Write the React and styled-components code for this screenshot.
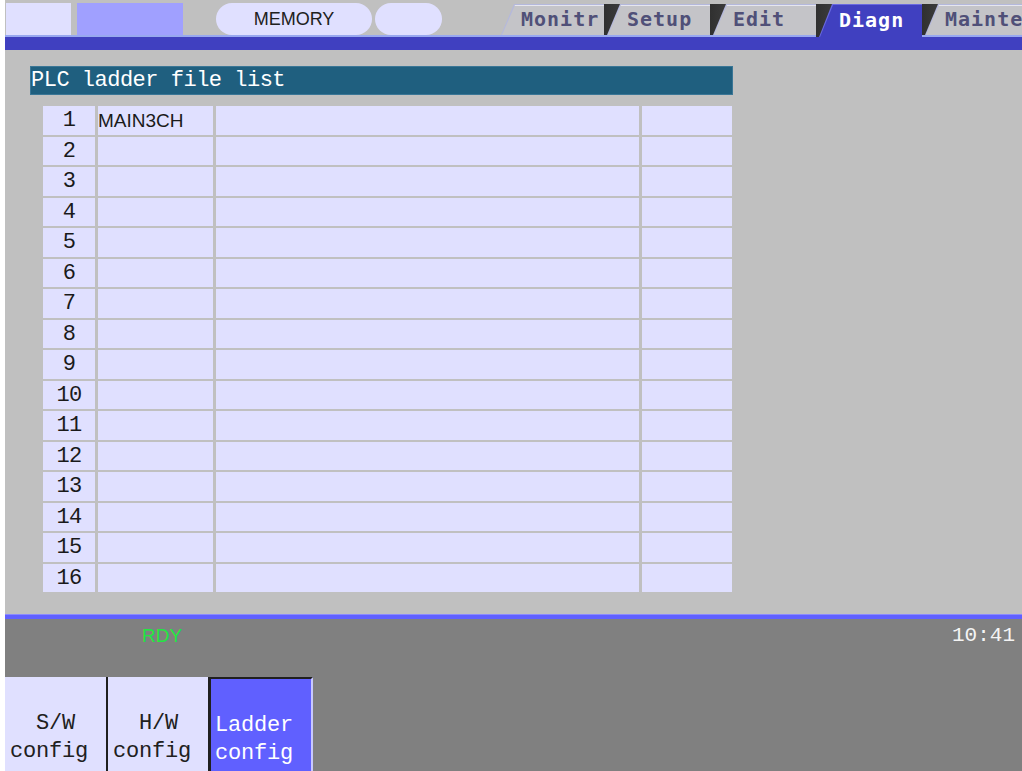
import React from 'react';
import styled, { createGlobalStyle } from 'styled-components';

const GlobalStyle = createGlobalStyle`
  body {
    margin: 0;
    background: #ffffff;
  }
`;

const mono = `"Liberation Mono", "DejaVu Sans Mono", monospace`;
const boldMono = `"DejaVu Sans Mono", "Liberation Mono", monospace`;
const sans = `"Liberation Sans", Arial, sans-serif`;

const tabs = [
  { name: 'Monitr', first: true },
  { name: 'Setup' },
  { name: 'Edit' },
  { name: 'Diagn', active: true },
  { name: 'Mainte' },
];

const softKeys = [
  { lines: ['  S/W', 'config'], width: 103 },
  { lines: ['  H/W', 'config'], width: 102 },
  { lines: ['Ladder', 'config'], width: 103, active: true },
];

const rows = Array.from({ length: 16 }, (_, i) => ({
  no: i + 1,
  file: i === 0 ? 'MAIN3CH' : '',
}));

function App() {
  return (
    <>
      <GlobalStyle />
      <Screen>
        <Header>
          <ModeBox $width={65} $color="#e0e0ff" style={{ marginLeft: 1 }} />
          <ModeBox $width={106} $color="#a0a0ff" />
          <Pill $width={156} $gap={33}>MEMORY</Pill>
          <Pill $width={67} $gap={3} />
          <TabRow>
            {tabs.map(t => (
              <TabSlot key={t.name} $active={t.active} $first={t.first}>
                <TabEdge $active={t.active}>
                  <TabFace $active={t.active}>{t.name}</TabFace>
                </TabEdge>
              </TabSlot>
            ))}
          </TabRow>
        </Header>
        <Band />
        <Main>
          <TitleBar>PLC ladder file list</TitleBar>
          <FileGrid>
            {rows.map(r => (
              <React.Fragment key={r.no}>
                <Cell $align="center">{r.no}</Cell>
                <Cell $sans>{r.file}</Cell>
                <Cell />
                <Cell />
              </React.Fragment>
            ))}
          </FileGrid>
        </Main>
        <Divider />
        <Status>
          <Ready>RDY</Ready>
          <Clock>10:41</Clock>
        </Status>
        <KeyBar>
          {softKeys.map(k => (
            <SoftKey key={k.lines[0]} $width={k.width} $active={k.active}>
              {k.lines.join('\n')}
            </SoftKey>
          ))}
        </KeyBar>
      </Screen>
    </>
  );
}

const Screen = styled.div`
  margin-left: 5px;
  width: 1017px;
  height: 771px;
  display: flex;
  flex-direction: column;
  background: #c0c0c0;
  overflow: hidden;
  font-family: ${mono};
`;

const Header = styled.div`
  flex: none;
  height: 37px;
  display: flex;
  align-items: flex-end;
  background: #c0c0c0;
  box-shadow: inset 0 -2px 0 #98a8f0;
`;

const ModeBox = styled.div`
  flex: none;
  width: ${p => p.$width}px;
  height: 32px;
  margin: 0 0 2px 6px;
  background: ${p => p.$color};
`;

const Pill = styled.div`
  flex: none;
  width: ${p => p.$width}px;
  height: 32px;
  margin: 0 0 2px ${p => p.$gap}px;
  border-radius: 16px;
  background: #e0e0ff;
  color: #202020;
  font-family: ${sans};
  font-size: 18px;
  line-height: 32px;
  text-align: center;
`;

const TabRow = styled.div`
  flex: none;
  display: flex;
  align-items: flex-end;
  margin-left: 56px;
  height: 100%;
`;

const TabSlot = styled.div`
  flex: none;
  width: 106px;
  height: ${p => (p.$active ? 33 : 31)}px;
  margin-bottom: ${p => (p.$active ? 0 : 2)}px;
  background: ${p =>
    p.$first ? '#c0c0c0' : 'linear-gradient(to right, #303030, #5c5c5c 60%, #909090)'};
`;

const TabEdge = styled.div`
  height: 100%;
  clip-path: polygon(16px 0, 100% 0, 100% 100%, 3px 100%);
  background: ${p => (p.$active ? '#6a6ae0' : '#b4b8dc')};
  padding: 1px 0 0 3px;
  box-sizing: border-box;
`;

const TabFace = styled.div`
  height: 100%;
  clip-path: polygon(14px 0, 100% 0, 100% 100%, 1px 100%);
  background: ${p => (p.$active ? '#4040c0' : '#c4c4c8')};
  box-shadow: ${p => (p.$active ? 'none' : 'inset 0 1px 0 #e6e6ee')};
  color: ${p => (p.$active ? '#ffffff' : '#505078')};
  font-family: ${boldMono};
  font-weight: bold;
  font-size: 20px;
  letter-spacing: 1px;
  line-height: ${p => (p.$active ? 30 : 29)}px;
  padding-left: 20px;
`;

const Band = styled.div`
  flex: none;
  height: 13px;
  background: #4040c0;
`;

const Main = styled.div`
  flex: none;
  height: 564px;
  box-sizing: border-box;
  padding: 16px 0 0 25px;
`;

const TitleBar = styled.div`
  width: 703px;
  height: 29px;
  box-sizing: border-box;
  border: 1px solid #3a7696;
  background: #1f5f7f;
  color: #ffffff;
  font-size: 22px;
  line-height: 27px;
  letter-spacing: -0.5px;
  white-space: pre;
`;

const FileGrid = styled.div`
  display: grid;
  grid-template-columns: 52px 115px 423px 90px;
  grid-auto-rows: 28.5px;
  column-gap: 3px;
  row-gap: 2px;
  margin: 11px 0 0 13px;
  width: 690px;
`;

const Cell = styled.div`
  background: #e0e0ff;
  color: #1a1a1a;
  font-family: ${p => (p.$sans ? sans : mono)};
  font-size: ${p => (p.$sans ? 19 : 22)}px;
  letter-spacing: ${p => (p.$sans ? 0 : -0.6)}px;
  line-height: 30px;
  text-align: ${p => p.$align || 'left'};
  font-variant-numeric: slashed-zero;
`;

const Divider = styled.div`
  flex: none;
  height: 5px;
  background: #6060ff;
  box-shadow: inset 0 1px 0 #8a8aff;
`;

const Status = styled.div`
  flex: none;
  height: 58px;
  display: flex;
  justify-content: space-between;
  align-items: flex-start;
  box-sizing: border-box;
  padding: 5px 7px 0 137px;
  background: #808080;
`;

const Ready = styled.span`
  color: #20e840;
  font-family: ${sans};
  font-size: 19px;
  line-height: 24px;
`;

const Clock = styled.span`
  color: #f4f4f4;
  font-size: 21px;
  line-height: 24px;
  font-variant-numeric: slashed-zero;
`;

const KeyBar = styled.div`
  flex: 1;
  display: flex;
  background: #808080;
`;

const SoftKey = styled.div`
  flex: none;
  width: ${p => p.$width}px;
  box-sizing: border-box;
  padding: 33px 0 0 ${p => (p.$active ? 4 : 5)}px;
  background: ${p => (p.$active ? '#6060ff' : '#e0e0ff')};
  border-right: 2px solid ${p => (p.$active ? '#c8c8ff' : '#202020')};
  border-top: ${p => (p.$active ? '2px solid #202020' : 'none')};
  border-left: ${p => (p.$active ? '1px solid #202020' : 'none')};
  color: ${p => (p.$active ? '#ffffff' : '#202020')};
  font-size: 22px;
  letter-spacing: -0.2px;
  line-height: 28px;
  white-space: pre;
`;

export default App;
